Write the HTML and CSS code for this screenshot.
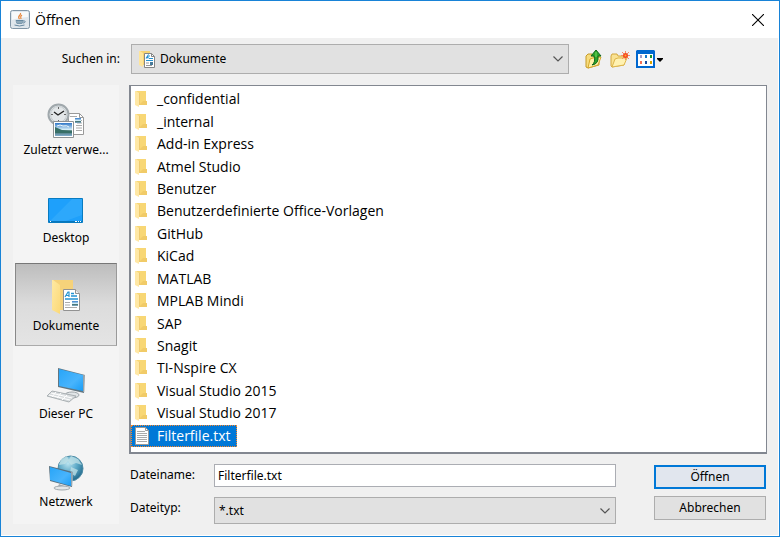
FILE: index.html
```html
<!DOCTYPE html>
<html lang="de">
<head>
<meta charset="utf-8">
<title>Öffnen</title>
<link rel="stylesheet" href="styles.css">
</head>
<body>
<svg class="defs" aria-hidden="true">
  <defs>
    <linearGradient id="gold" x1="0" x2="1" y1="0" y2="1"><stop offset="0" stop-color="#ffe9a2"/><stop offset="1" stop-color="#fbd978"/></linearGradient>
    <linearGradient id="screen" x1="0" x2="1" y1="0" y2="1"><stop offset="0" stop-color="#28a5f8"/><stop offset=".6" stop-color="#48b4fc"/><stop offset="1" stop-color="#189cf5"/></linearGradient>
    <radialGradient id="globe" cx=".4" cy=".3" r=".75"><stop offset="0" stop-color="#b9e3ef"/><stop offset=".5" stop-color="#5ba8c6"/><stop offset="1" stop-color="#1c6285"/></radialGradient>
    <linearGradient id="photo" x1="0" x2="0" y1="0" y2="1"><stop offset="0" stop-color="#2f77c8"/><stop offset=".5" stop-color="#d3ecf6"/><stop offset=".62" stop-color="#3d6b62"/><stop offset="1" stop-color="#83aed0"/></linearGradient>
    <symbol id="folder" viewBox="0 0 12 16">
      <path d="M1 0h10v10h1v4H3z" fill="#f8d775"/>
      <path d="M8 10h4v4H4z" fill="#f1cb68"/>
      <path d="M0 0h1l3 2v14l-4-2z" fill="#ffe8a6"/>
      <path d="M4.500 2v12" stroke="#efcb70" fill="none"/>
    </symbol>
    <symbol id="page" viewBox="0 0 17 22">
      <path d="M.5.5h12l4 4v17H.5z" fill="#fff" stroke="#929292"/>
      <path d="M12.500.5v4h4" fill="#eee" stroke="#929292"/>
      <path d="M2 8l3-5h1v5M3 6.500h3" fill="none" stroke="#2493d2" stroke-width="1.200"/>
      <path d="M8 4.500h3M8 7h6M2 10h13" stroke="#2493d2" stroke-width="1.500"/>
      <path d="M2 13.500h5M2 16h5M2 18.500h12" stroke="#aaa"/>
      <rect x="9" y="12" width="6" height="5" fill="url(#photo)"/>
    </symbol>
  </defs>
</svg>
<main class="dialog">
  <header class="titlebar">
    <svg class="java" viewBox="0 0 20 19" aria-hidden="true">
      <rect x=".5" y=".5" width="19" height="18" rx="2" fill="#dfe6ec" stroke="#8095a6"/>
      <path d="M2 10V2h16v5Q8 8 2 10" fill="#f7f9fa"/>
      <path d="M10.500 3c1 2.500-4 3-1 6M12 5c-2.500 1.500-1 2.500-1 4" fill="none" stroke="#e8873d" stroke-width="1.200"/>
      <path d="M6 10.500h7l-1 3H7zM13 11c3.500-.5 2.500 2 0 2M4.500 15q5 2 10 0" fill="none" stroke="#6688a0"/>
      <path d="M6 11h7l-1 2.500H7z" fill="#8fa9ba"/>
    </svg>
    <h1>Öffnen</h1>
    <button class="close" aria-label="Schließen"><svg viewBox="0 0 12 12"><path d="M0 0l12 12M12 0L0 12" stroke="#000" stroke-width="1.100"/></svg></button>
  </header>

  <div class="toolbar">
    <label for="place">Suchen in:</label>
    <div class="combo place">
      <svg class="combo-icon" viewBox="0 0 16 17" aria-hidden="true">
        <path d="M1 0h10v14H3z" fill="#f6d372"/><path d="M0 0h1l3 2v14l-4-2z" fill="#ffe59a"/>
        <path d="M5.500 2.500h7l3 3v11h-10z" fill="#fff" stroke="#858585"/><path d="M12.500 2.500v3h3" fill="none" stroke="#858585"/>
        <path d="M7 7.500l2-3v3M10 5h1M10 7.500h4M7 9.500h7" stroke="#2493d2" stroke-width="1.200" fill="none"/>
        <path d="M7 12h3M7 14.500h6" stroke="#999"/><path d="M11 11h3v3h-3z" fill="#477a9a"/>
      </svg>
      <select id="place"><option>Dokumente</option></select>
      <svg class="chevron" viewBox="0 0 10 6" aria-hidden="true"><path d="M.5.5L5 5 9.500.5"/></svg>
    </div>
    <div class="tools">
      <button aria-label="Übergeordneter Ordner"><svg class="tool" viewBox="0 0 18 20">
        <path d="M1 7l2-2h4l1 2h6v9L3 19l-2-1z" fill="#f7dc7d" stroke="#c59a28"/>
        <path d="M3 19l2-9 3-1 8-1-3 8z" fill="#fff1a8" stroke="#d6a72d"/>
        <path d="M7 16q4-3 2-9H6l5-6 5 6h-3q1 8-6 9z" fill="#2ba52b" stroke="#11671a"/>
        <path d="M11 3v5" stroke="#78d962"/>
      </svg></button>
      <button aria-label="Neuer Ordner"><svg class="tool" viewBox="0 0 20 20">
        <path d="M1 7l1-2h5l1 2h6v9L2 18l-1-1z" fill="#f9e292" stroke="#d4a83d"/>
        <path d="M2 18l3-8 3-1h9l-3 7z" fill="#fff2b2" stroke="#deb64c"/>
        <path d="M15.500 2v9M11 6.500h9M12 3l7 7M19 3l-7 7" stroke="#f58b69"/><circle cx="15.500" cy="6.500" r="2.500" fill="#f4481f"/><circle cx="15.500" cy="6.500" r="1" fill="#ffad32"/>
      </svg></button>
      <button class="view" aria-label="Ansicht"><svg class="views" viewBox="0 0 27 18">
        <path d="M1 0h17l1 1v17H0V1z" fill="#0067cf"/><path d="M2 4h15v12H2z" fill="#fff"/>
        <path d="M4 5h2v3H4z" fill="#a39ac9"/><path d="M9 5h2v3H9z" fill="#1879ca"/><path d="M14 5h2v3h-2z" fill="#18942b"/>
        <path d="M4 11h2v3H4z" fill="#f36e54"/><path d="M9 11h2v3H9z" fill="#174ba0"/><path d="M14 11h2v3h-2z" fill="#d9a400"/>
        <path d="M21 8h6v1l-3 3-3-3z" fill="#000"/>
      </svg></button>
    </div>
  </div>

  <div class="content">
    <nav class="places" aria-label="Orte">
      <button><svg class="place-icon" viewBox="0 0 38 36">
        <path d="M21.500 10.500h11l4 4v17h-15z" fill="#fff" stroke="#999"/><path d="M32.500 10.500v4h4" fill="none" stroke="#999"/>
        <path d="M23 13.500h7M30 17.500h5M30 20h5M29 22.500h6M29 25h6M29 27.500h6" stroke="#aaa"/><path d="M28 15h6v5h-6z" fill="url(#photo)"/>
        <circle cx="11.500" cy="11.500" r="10" fill="#e3e7e9" stroke="#a0a8ac" stroke-width="2"/><circle cx="11.500" cy="11.500" r="8" fill="none" stroke="#c4cbce"/>
        <path d="M7 9l4 3 6-4" stroke="#222" stroke-width="1.400" fill="none"/><path d="M11.500 4v2M4 11.500h2M17 11.500h2M11.500 17v2" stroke="#666"/>
        <path d="M6.500 18.500h20v16h-20z" fill="#fff" stroke="#8d9295"/><path d="M8 20h17v13H8z" fill="url(#photo)"/><path d="M8 24l7 3 10 1v2H8z" fill="#376f67"/><path d="M10 23q3-2 6 0 4-1 6 1" stroke="#eef8fa" fill="none"/>
      </svg><span>Zuletzt verwe...</span></button>
      <button><svg class="place-icon" viewBox="0 0 38 36">
        <path d="M1.500 7.500h34v24h-34z" fill="#1ea0fb" stroke="#087bc0"/><path d="M35 9v15L16 31H2l23-23h10z" fill="#37aefc" opacity=".6"/>
        <path d="M2 30.500h33" stroke="#0877bd"/><path d="M3 30.500h1M28 30.500h2M31 30.500h1M33 30.500h1" stroke="#fff"/>
      </svg><span>Desktop</span></button>
      <button class="active" aria-pressed="true"><svg class="place-icon" viewBox="0 0 38 36">
        <path d="M6 1h20v30H11z" fill="#f6d27a"/><path d="M5 1h1l7 5v29l-8-4z" fill="url(#gold)"/>
        <use href="#page" x="16" y="10" width="17" height="22"/>
      </svg><span>Dokumente</span></button>
      <button><svg class="place-icon" viewBox="0 0 38 36">
        <path d="M20 25l5 2-2 4h-5z" fill="#c4c9cc"/><ellipse cx="25" cy="28" rx="7" ry="3" fill="#e1e5e7" stroke="#a0a7ab"/>
        <path d="M11 1l27 7-1 18-26-6z" fill="#627681"/><path d="M12 2l24 6v16l-24-5z" fill="url(#screen)"/><path d="M37 8v17" stroke="#c8ced2"/>
        <path d="M5 24l24 5-7 6L0 29z" fill="#d8dcde" stroke="#aab0b3"/><path d="M4 26l21 5M2 28l21 5M9 25l-4 5M14 26l-4 5M20 28l-5 5" stroke="#fff"/>
      </svg><span>Dieser PC</span></button>
      <button><svg class="place-icon" viewBox="0 0 38 36">
        <circle cx="23.500" cy="13.500" r="12.500" fill="url(#globe)" stroke="#4c8ba5"/><path d="M14 4l6-3 2 4-4 4-6 1zM24 1l7 3 4 6-6-2-5 2-3-4zM24 12l7 3-3 6-5-3z" fill="#c1e2e7" opacity=".75"/>
        <path d="M12 29l8 3-2 2h-8z" fill="#a2aaaf"/><ellipse cx="15" cy="33" rx="8" ry="2" fill="#e3e7e9" stroke="#a1a9ae"/>
        <path d="M2 11l24 6-1 15-22-6z" fill="#566f7f"/><path d="M3 12l21 6v13L3 25z" fill="url(#screen)"/><path d="M25 17v14" stroke="#ced9df"/>
      </svg><span>Netzwerk</span></button>
    </nav>

    <section class="browser">
      <ul class="files" aria-label="Dateien">
        <li><button><svg><use href="#folder"/></svg><span>_confidential</span></button></li>
        <li><button><svg><use href="#folder"/></svg><span>_internal</span></button></li>
        <li><button><svg><use href="#folder"/></svg><span>Add-in Express</span></button></li>
        <li><button><svg><use href="#folder"/></svg><span>Atmel Studio</span></button></li>
        <li><button><svg><use href="#folder"/></svg><span>Benutzer</span></button></li>
        <li><button><svg><use href="#folder"/></svg><span>Benutzerdefinierte Office-Vorlagen</span></button></li>
        <li><button><svg><use href="#folder"/></svg><span>GitHub</span></button></li>
        <li><button><svg><use href="#folder"/></svg><span>KiCad</span></button></li>
        <li><button><svg><use href="#folder"/></svg><span>MATLAB</span></button></li>
        <li><button><svg><use href="#folder"/></svg><span>MPLAB Mindi</span></button></li>
        <li><button><svg><use href="#folder"/></svg><span>SAP</span></button></li>
        <li><button><svg><use href="#folder"/></svg><span>Snagit</span></button></li>
        <li><button><svg><use href="#folder"/></svg><span>TI-Nspire CX</span></button></li>
        <li><button><svg><use href="#folder"/></svg><span>Visual Studio 2015</span></button></li>
        <li><button><svg><use href="#folder"/></svg><span>Visual Studio 2017</span></button></li>
        <li><button class="selected"><svg viewBox="0 0 14 18"><path d="M.5.5h10l3 3v14H.5z" fill="#fff" stroke="#999"/><path d="M10.500.5v3h3" fill="none" stroke="#999"/><path d="M2 4.500h8M2 6.500h10M2 8.500h10M2 10.500h10M2 12.500h10M2 14.500h10" stroke="#aaa"/></svg><span>Filterfile.txt</span></button></li>
      </ul>
      <form class="bottom" onsubmit="return false">
        <div class="fields">
          <label for="name">Dateiname:</label>
          <input id="name" type="text" value="Filterfile.txt">
          <label for="type">Dateityp:</label>
          <div class="combo type">
            <select id="type"><option>*.txt</option></select>
            <svg class="chevron" viewBox="0 0 10 6" aria-hidden="true"><path d="M.5.5L5 5 9.500.5"/></svg>
          </div>
        </div>
        <div class="actions">
          <button class="default">Öffnen</button>
          <button type="button">Abbrechen</button>
        </div>
      </form>
    </section>
  </div>
</main>
</body>
</html>
```

FILE: styles.css
```css
* { box-sizing: border-box; }
body {
  margin: 0;
  color: #000;
  font: 12px/16px "Noto Sans", "Liberation Sans", sans-serif;
}
button, input, select { margin: 0; font: inherit; color: inherit; border-radius: 0; }
button { padding: 0; border: 0; background: none; }
svg { display: block; flex: none; }
.defs { position: absolute; width: 0; height: 0; }

.dialog {
  display: flex;
  flex-direction: column;
  min-height: 100vh;
  border: 1px solid #1883d7;
  background: #f0f0f0;
  box-shadow: inset -1px -1px #fff;
}
.titlebar {
  display: flex;
  align-items: center;
  gap: 5px;
  height: 37px;
  padding: 0 15px 0 9px;
  background: #fff;
}
.java { width: 20px; height: 19px; }
h1 { margin: 0; font: 14px/20px "Open Sans", "Noto Sans", sans-serif; }
.close { margin-left: auto; }
.close svg { width: 12px; height: 12px; }

.toolbar {
  display: grid;
  grid-template-columns: 107px 1fr 182px;
  column-gap: 11px;
  align-items: center;
  padding: 6px 17px 11px 12px;
}
.toolbar > label { text-align: right; }
.combo {
  display: flex;
  align-items: center;
  border: 1px solid #adadad;
  background: #e1e1e1;
}
.combo.place { height: 30px; padding: 0 5px 0 7px; gap: 5px; }
.combo-icon { width: 16px; height: 17px; }
.combo select {
  flex: 1;
  min-width: 0;
  height: 100%;
  padding: 0;
  border: 0;
  background: none;
  appearance: none;
}
.chevron { width: 10px; height: 6px; fill: none; stroke: #555; stroke-width: 1.2; }
.tools { display: flex; align-items: center; gap: 6px; padding-left: 4px; }
.tool { width: 20px; height: 20px; }
.views { width: 27px; height: 18px; }

.content {
  flex: 1;
  display: grid;
  grid-template-columns: 106px 1fr;
  column-gap: 10px;
  padding: 0 12px 12px 12px;
}
.places {
  display: grid;
  grid-auto-rows: 1fr;
  padding: 0 2px;
  background: #f4f4f4;
}
.places button {
  display: flex;
  flex-direction: column;
  align-items: center;
  justify-content: center;
  gap: 3px;
  margin: 2px 0;
  padding-top: 4px;
  border: 1px solid transparent;
}
.places .active {
  border-color: #777 #999 #aaa #888;
  background: linear-gradient(#bdbdbd, #dcdcdc 50%, #e4e4e4);
}
.place-icon { width: 38px; height: 36px; }

.browser { display: flex; flex-direction: column; gap: 10px; }
.files {
  flex: 1;
  display: grid;
  grid-auto-rows: 1fr;
  margin: 0;
  padding: 2px 0 5px;
  border: solid #828790;
  border-width: 1px 1px 2px 2px;
  background: #fff;
  list-style: none;
  font: 14px/20px "Open Sans", "Noto Sans", sans-serif;
}
.files li { display: flex; }
.files button {
  display: grid;
  grid-template-columns: 18px auto;
  column-gap: 4px;
  align-items: center;
  padding: 0 5px 0 3px;
  border: 1px dotted transparent;
}
.files svg { width: 12px; height: 16px; }
.files .selected { border-color: #ff8728; background: #0078d7; color: #fff; }
.files .selected svg { width: 14px; height: 18px; }

.bottom {
  display: grid;
  grid-template-columns: 1fr 112px;
  column-gap: 38px;
  padding-right: 1px;
}
.fields {
  display: grid;
  grid-template-columns: 84px 1fr;
  grid-template-rows: 23px 27px;
  row-gap: 10px;
  column-gap: 1px;
}
.fields label { padding: 3px 0 0 1px; }
.fields input {
  min-width: 0;
  padding: 0 3px;
  border: 1px solid #abadb3;
  background: #fff;
}
.combo.type { padding: 0 5px 0 4px; }
.actions { display: grid; grid-auto-rows: 24px; gap: 7px; padding-top: 1px; }
.actions button { border: 1px solid #adadad; background: #e1e1e1; }
.actions .default { border: 2px solid #0078d7; background: #e1e6ee; }
```
